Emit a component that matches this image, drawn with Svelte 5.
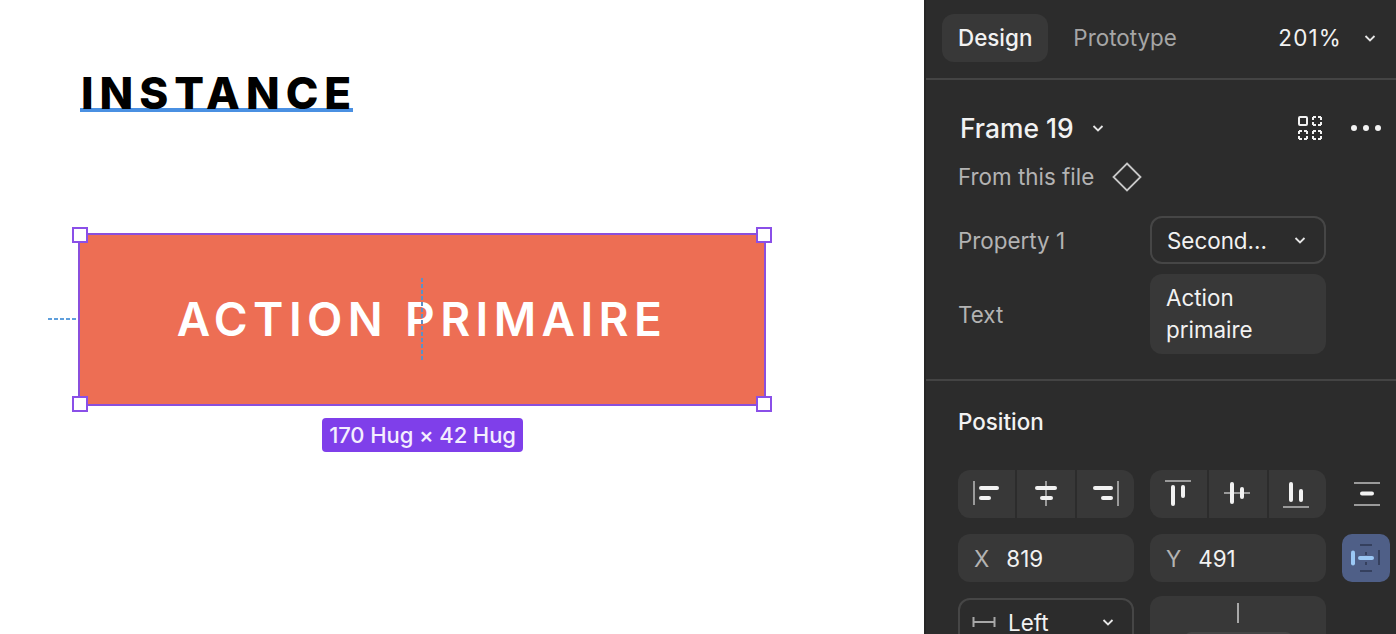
<script lang="ts">
  const chevron = "M1.5 4 6 8.5 10.5 4";

  // axis line + two bars for each align button, on a 30x30 grid
  const aligns = [
    [
      ["M2 2v24", "M9 9h16", "M9 19h8"],
      ["M15 2v25", "M6 9h18", "M11 19h9"],
      ["M28 2v25", "M5 9h16", "M13 19h8"]
    ],
    [
      ["M1 2h26", "M9 8v17", "M19 8v9"],
      ["M1 14h26", "M9 5v18", "M19 10v8"],
      ["M1 28h26", "M9 5v16", "M19 12v9"]
    ]
  ];
</script>

<div class="page">
  <main class="canvas">
    <h1 class="title">INSTANCE</h1>
    <div class="guide-left"></div>
    <div class="frame">
      <span class="label">ACTION PRIMAIRE</span>
      <i class="handle tl"></i>
      <i class="handle tr"></i>
      <i class="handle bl"></i>
      <i class="handle br"></i>
      <div class="guide-center"></div>
    </div>
    <div class="size-tag">170 Hug × 42 Hug</div>
  </main>

  <aside class="panel">
    <header class="tabs">
      <span class="tab active">Design</span>
      <span class="tab">Prototype</span>
      <span class="zoom-value">201%</span>
      <svg class="chev" width="12" height="12" viewBox="0 0 12 12"><path d={chevron} /></svg>
    </header>

    <section class="instance">
      <div class="name-row">
        <span class="name">Frame 19</span>
        <svg class="chev name-chev" width="12" height="12" viewBox="0 0 12 12"><path d={chevron} /></svg>
        <svg class="grid-icon" width="26" height="26" viewBox="0 0 26 26">
          <rect x="2" y="2" width="8" height="8" rx="1" />
          <rect class="dash" x="16" y="2" width="8" height="8" />
          <rect class="dash" x="2" y="16" width="8" height="8" />
          <rect class="dash" x="16" y="16" width="8" height="8" />
        </svg>
        <div class="dots"><i></i><i></i><i></i></div>
      </div>
      <div class="source">
        <span>From this file</span>
        <svg width="30" height="30" viewBox="0 0 30 30"><path d="M15 1.5 28.5 15 15 28.5 1.5 15Z" /></svg>
      </div>
      <div class="prop-row">
        <span class="prop-label">Property 1</span>
        <div class="select">
          <span>Second...</span>
          <svg class="chev" width="12" height="12" viewBox="0 0 12 12"><path d={chevron} /></svg>
        </div>
      </div>
      <div class="prop-row text-row">
        <span class="prop-label">Text</span>
        <div class="textbox">Action<br />primaire</div>
      </div>
    </section>

    <section class="position">
      <h2>Position</h2>
      <div class="align-row">
        {#each aligns as group}
          <div class="align-group">
            {#each group as icon}
              <div class="align-btn">
                <svg width="30" height="30" viewBox="0 0 30 30">
                  <path class="axis" d={icon[0]} />
                  <path class="bar" d={icon[1]} />
                  <path class="bar" d={icon[2]} />
                </svg>
              </div>
            {/each}
          </div>
        {/each}
        <svg class="distribute" width="30" height="30" viewBox="0 0 30 30">
          <path class="axis" d="M2 4h26M2 26h26" />
          <path class="bar" d="M10 14.5h10" />
        </svg>
      </div>
      <div class="xy-row">
        <div class="field"><span class="axis-name">X</span><span>819</span></div>
        <div class="field"><span class="axis-name">Y</span><span>491</span></div>
        <div class="toggle">
          <svg width="30" height="30" viewBox="0 0 30 30">
            <path class="dim" d="M9 2h12M9 28h12M28 7v15M15 9v3M15 19v3" />
            <path class="lit" d="M2 9.5v11" />
            <path class="lit" d="M9 15h12" />
          </svg>
        </div>
      </div>
      <div class="constraint-row">
        <div class="select left-select">
          <svg class="span-icon" width="24" height="12" viewBox="0 0 24 12"><path d="M1.5 1v10M22.5 1v10M1.5 6h21" /></svg>
          <span>Left</span>
          <svg class="chev" width="12" height="12" viewBox="0 0 12 12"><path d={chevron} /></svg>
        </div>
        <div class="constraint-box">
          <i class="tick"></i>
          <i class="inner"></i>
        </div>
      </div>
    </section>
  </aside>
</div>

<style>
  :global(body) {
    margin: 0;
    overflow: hidden;
    background: #2c2c2c;
  }

  .page {
    display: flex;
    width: 1396px;
    height: 634px;
    overflow: hidden;
    font-family: Inter, "Liberation Sans", sans-serif;
  }

  .canvas {
    position: relative;
    width: 924px;
    flex-shrink: 0;
    background: #fff;
  }

  .title {
    position: absolute;
    left: 80px;
    top: 65px;
    width: 273px;
    height: 47px;
    margin: 0;
    box-sizing: border-box;
    border-bottom: 4px solid #4a90e2;
    font-size: 44px;
    line-height: 56px;
    font-weight: 800;
    letter-spacing: 6px;
    color: #000;
    white-space: nowrap;
    text-indent: 1px;
  }

  .guide-left {
    position: absolute;
    left: 48px;
    top: 318px;
    width: 28px;
    height: 2px;
    background: repeating-linear-gradient(90deg, #5f9fdc 0 4px, transparent 4px 6px);
  }

  .frame {
    position: absolute;
    left: 78px;
    top: 233px;
    width: 688px;
    height: 173px;
    box-sizing: border-box;
    border: 2px solid #8a4fdc;
    background: #ed6e54;
    display: flex;
    align-items: center;
    justify-content: center;
  }

  .label {
    color: #fff;
    font-size: 46px;
    font-weight: 600;
    letter-spacing: 5.4px;
    white-space: nowrap;
    padding-bottom: 2px;
  }

  .handle {
    position: absolute;
    width: 16px;
    height: 16px;
    box-sizing: border-box;
    border: 2px solid #8a4fe8;
    background: #fff;
  }
  .tl { left: -8px; top: -8px; }
  .tr { right: -8px; top: -8px; }
  .bl { left: -8px; bottom: -8px; }
  .br { right: -8px; bottom: -8px; }

  .guide-center {
    position: absolute;
    left: 341px;
    top: 43px;
    width: 2px;
    height: 84px;
    background: repeating-linear-gradient(180deg, #5f8fc4 0 4px, transparent 4px 6px);
  }

  .size-tag {
    position: absolute;
    left: 322px;
    top: 418px;
    width: 201px;
    height: 34px;
    border-radius: 4px;
    background: #7f3fea;
    color: #f4eefe;
    font-size: 22px;
    font-weight: 500;
    letter-spacing: -0.1px;
    line-height: 35px;
    text-align: center;
    white-space: nowrap;
  }

  .panel {
    width: 472px;
    flex-shrink: 0;
    box-sizing: border-box;
    border-left: 2px solid #262626;
    background: #2c2c2c;
    color: #f2f2f2;
    font-size: 22.4px;
  }

  .tabs {
    display: flex;
    align-items: center;
    height: 80px;
    box-sizing: border-box;
    padding: 0 20px 3px 16px;
    border-bottom: 2px solid #444;
  }

  .tab {
    height: 48px;
    line-height: 48px;
    padding: 0 16px;
    border-radius: 12px;
    color: #a6a6a6;
    margin-right: 9px;
  }

  .tab.active {
    background: #383838;
    color: #f2f2f2;
    font-weight: 500;
  }

  .zoom-value {
    margin-left: auto;
    letter-spacing: 1.2px;
  }

  .chev {
    fill: none;
    stroke: #e6e6e6;
    stroke-width: 1.8;
    margin-left: 22px;
    flex-shrink: 0;
  }

  .instance {
    height: 301px;
    box-sizing: border-box;
    padding: 30px 0 0 32px;
    border-bottom: 2px solid #444;
  }

  .name-row {
    display: flex;
    align-items: center;
    height: 36px;
    padding-right: 15px;
  }

  .name {
    margin-left: 2px;
    font-size: 26.4px;
    font-weight: 500;
  }

  .name-chev {
    margin-left: 18px;
  }

  .grid-icon {
    margin-left: auto;
    fill: none;
    stroke: #f2f2f2;
    stroke-width: 2;
    stroke-linejoin: round;
  }

  .grid-icon .dash {
    stroke-dasharray: 3 2 3 0;
  }

  .dots {
    display: flex;
    gap: 6px;
    margin-left: 28px;
  }

  .dots i {
    width: 6px;
    height: 6px;
    border-radius: 50%;
    background: #f2f2f2;
  }

  .source {
    display: flex;
    align-items: center;
    height: 30px;
    margin-top: 16px;
    color: #b3b3b3;
  }

  .source span {
    margin-bottom: 2px;
  }

  .source svg {
    margin-left: 18px;
    fill: none;
    stroke: #c8c8c8;
    stroke-width: 1.8;
  }

  .prop-row {
    display: grid;
    grid-template-columns: 192px 176px;
    align-items: center;
    margin-top: 24px;
  }

  .text-row {
    margin-top: 10px;
  }

  .prop-label {
    color: #b3b3b3;
  }

  .select {
    display: flex;
    align-items: center;
    justify-content: space-between;
    height: 48px;
    box-sizing: border-box;
    padding: 0 18px 0 15px;
    border: 2px solid #464646;
    border-radius: 12px;
  }

  .select .chev {
    margin-left: 0;
  }

  .textbox {
    height: 80px;
    box-sizing: border-box;
    padding: 8px 16px;
    border-radius: 12px;
    background: #383838;
    line-height: 32px;
  }

  .position {
    padding: 0 0 0 32px;
  }

  .position h2 {
    margin: 0;
    height: 89px;
    line-height: 82px;
    font-size: 22.4px;
    font-weight: 500;
  }

  .align-row {
    display: flex;
    align-items: center;
    gap: 16px;
    height: 48px;
  }

  .align-group {
    display: flex;
    gap: 2px;
    width: 176px;
    height: 48px;
    border-radius: 12px;
    overflow: hidden;
  }

  .align-btn {
    flex: 1;
    display: flex;
    align-items: center;
    justify-content: center;
    background: #383838;
  }

  .align-row svg {
    fill: none;
  }

  .axis {
    stroke: #9a9a9a;
    stroke-width: 2;
  }

  .bar {
    stroke: #f2f2f2;
    stroke-width: 4;
    stroke-linecap: round;
  }

  .distribute {
    margin-left: 10px;
  }

  .xy-row {
    display: flex;
    gap: 16px;
    margin-top: 16px;
  }

  .field {
    display: flex;
    align-items: center;
    gap: 17px;
    width: 176px;
    height: 48px;
    box-sizing: border-box;
    padding-left: 16px;
    border-radius: 12px;
    background: #383838;
  }

  .axis-name {
    color: #b3b3b3;
  }

  .toggle {
    width: 48px;
    height: 48px;
    border-radius: 10px;
    background: #4f5f87;
    display: flex;
    align-items: center;
    justify-content: center;
  }

  .toggle svg {
    fill: none;
  }

  .dim {
    stroke: #35405e;
    stroke-width: 2;
  }

  .lit {
    stroke: #9bc8f5;
    stroke-width: 4;
    stroke-linecap: round;
  }

  .constraint-row {
    display: flex;
    gap: 16px;
    margin-top: 16px;
  }

  .left-select {
    width: 176px;
    height: 60px;
    padding: 0 18px 12px 12px;
    justify-content: flex-start;
  }

  .left-select .chev {
    margin-left: auto;
  }

  .span-icon {
    fill: none;
    stroke: #a8a8a8;
    stroke-width: 2;
    margin-right: 12px;
  }

  .constraint-box {
    position: relative;
    width: 176px;
    height: 62px;
    margin-top: -2px;
    border-radius: 12px 12px 0 0;
    background: #383838;
  }

  .tick {
    position: absolute;
    left: 87px;
    top: 7px;
    width: 2px;
    height: 20px;
    background: #a8a8a8;
  }

  .inner {
    position: absolute;
    left: 35px;
    top: 36px;
    width: 107px;
    height: 20px;
    box-sizing: border-box;
    border: 2px solid #454545;
    border-bottom: 0;
    border-radius: 6px 6px 0 0;
  }
</style>
